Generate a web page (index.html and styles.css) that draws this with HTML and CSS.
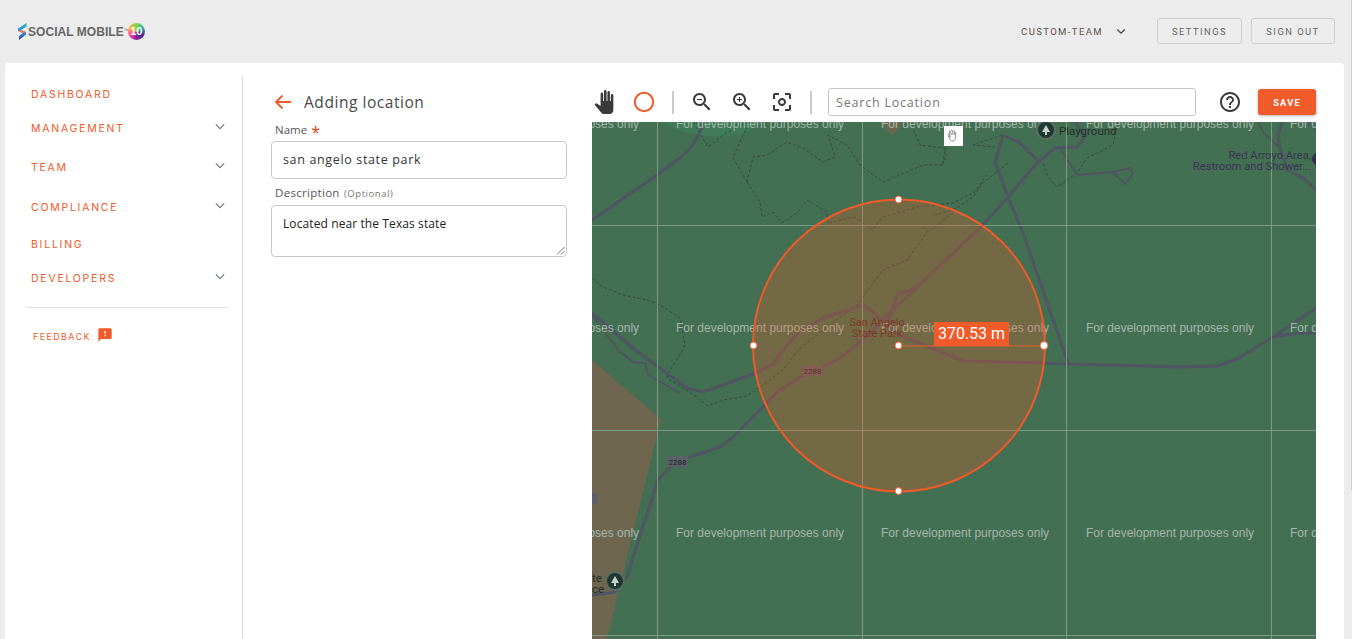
FILE: index.html
```html
<!DOCTYPE html>
<html lang="en">
<head>
<meta charset="utf-8">
<title>Adding location</title>
<link rel="stylesheet" href="styles.css">
</head>
<body>
<header class="topbar">
  <div class="logo">
    <svg class="logo-s" viewBox="0 0 11 17"><defs><linearGradient id="lg" x1="0" y1="0" x2="0" y2="1"><stop offset="0" stop-color="#22b4dc"/><stop offset=".5" stop-color="#2f8fd8"/><stop offset="1" stop-color="#2a4cb0"/></linearGradient></defs><path d="M9.500 0 L9.500 3.500 L4 7 L9 9 L9 11.500 L2 17 L2 13 L6 10 L1 8 L1 5.500 Z" fill="url(#lg)"/><path d="M1 8 L6 10 L9 9 L4 7 Z" fill="#f0805a"/></svg>
    <span class="logo-text">SOCIAL MOBILE</span><span class="logo-tm">™</span>
    <span class="logo-ten">10</span>
  </div>
  <div class="top-actions">
    <span class="team">CUSTOM-TEAM</span>
    <svg class="team-chev" viewBox="0 0 12 8"><path d="M1.500 1.500 L6 6 L10.500 1.500"/></svg>
    <button class="ghost settings">SETTINGS</button>
    <button class="ghost signout">SIGN OUT</button>
  </div>
</header>
<main class="panel">
  <nav class="nav">
    <div class="nav-item n1"><span>DASHBOARD</span></div>
    <div class="nav-item n2"><span>MANAGEMENT</span><svg class="chev" viewBox="0 0 12 8"><path d="M1 1.500 L6 6.500 L11 1.500"/></svg></div>
    <div class="nav-item n3"><span>TEAM</span><svg class="chev" viewBox="0 0 12 8"><path d="M1 1.500 L6 6.500 L11 1.500"/></svg></div>
    <div class="nav-item n4"><span>COMPLIANCE</span><svg class="chev" viewBox="0 0 12 8"><path d="M1 1.500 L6 6.500 L11 1.500"/></svg></div>
    <div class="nav-item n5"><span>BILLING</span></div>
    <div class="nav-item n6"><span>DEVELOPERS</span><svg class="chev" viewBox="0 0 12 8"><path d="M1 1.500 L6 6.500 L11 1.500"/></svg></div>
    <hr class="nav-rule">
    <div class="feedback"><span>FEEDBACK</span><svg viewBox="0 0 24 24"><path d="M20 2H4c-1.100 0-1.990.9-1.990 2L2 22l4-4h14c1.100 0 2-.9 2-2V4c0-1.100-.9-2-2-2zm-7 12h-2v-2h2v2zm0-4h-2V6h2v4z"/></svg></div>
  </nav>
  <section class="form">
    <div class="form-title">
      <svg class="back" viewBox="0 0 18 16"><path d="M17 8 H2 M8.500 1.500 L2 8 L8.500 14.500"/></svg>
      <h1>Adding location</h1>
    </div>
    <label class="lbl name-lbl">Name <span class="star">*</span></label>
    <div class="input">san angelo state park</div>
    <label class="lbl desc-lbl">Description <small>(Optional)</small></label>
    <div class="textarea">Located near the Texas state
      <svg class="grip" viewBox="0 0 9 9"><path d="M8.500 1 L1 8.500 M8.500 5 L5 8.500"/></svg>
    </div>
  </section>
  <section class="work">
    <div class="tools">
      <svg class="tool hand" viewBox="0 0 24 24"><path d="M23 5.500V20c0 2.200-1.800 4-4 4h-7.300c-1.080 0-2.100-.43-2.850-1.190L1 14.830s1.260-1.230 1.300-1.250c.22-.19.49-.29.79-.29.22 0 .42.06.6.16.04.01 4.310 2.460 4.310 2.460V4c0-.83.67-1.500 1.500-1.500S11 3.170 11 4v7h1V1.500c0-.83.67-1.500 1.500-1.500S15 .67 15 1.500V11h1V2.500c0-.83.67-1.500 1.500-1.500s1.500.67 1.500 1.500V11h1V5.500c0-.83.67-1.500 1.500-1.500s1.500.67 1.500 1.500z"/></svg>
      <svg class="tool ring" viewBox="0 0 24 24"><circle cx="12" cy="12" r="9.200"/></svg>
      <i class="sep"></i>
      <svg class="tool" viewBox="0 0 24 24"><path d="M15.500 14h-.79l-.28-.27C15.410 12.590 16 11.110 16 9.500 16 5.910 13.090 3 9.500 3S3 5.910 3 9.500 5.910 16 9.500 16c1.610 0 3.090-.59 4.230-1.570l.27.28v.79l5 4.990L20.490 19l-4.990-5zm-6 0C7.010 14 5 11.990 5 9.500S7.010 5 9.500 5 14 7.010 14 9.500 11.990 14 9.500 14zM7 9h5v1H7z"/></svg>
      <svg class="tool" viewBox="0 0 24 24"><path d="M15.500 14h-.79l-.28-.27C15.410 12.590 16 11.110 16 9.500 16 5.910 13.090 3 9.500 3S3 5.910 3 9.500 5.910 16 9.500 16c1.610 0 3.090-.59 4.230-1.570l.27.28v.79l5 4.990L20.490 19l-4.990-5zm-6 0C7.010 14 5 11.990 5 9.500S7.010 5 9.500 5 14 7.010 14 9.500 11.990 14 9.500 14z"/><path d="M12 10h-2v2H9v-2H7V9h2V7h1v2h2v1z"/></svg>
      <svg class="tool" viewBox="0 0 24 24"><path d="M5 15H3v4c0 1.100.9 2 2 2h4v-2H5v-4zM5 5h4V3H5c-1.100 0-2 .9-2 2v4h2V5zm14-2h-4v2h4v4h2V5c0-1.100-.9-2-2-2zm0 16h-4v2h4c1.100 0 2-.9 2-2v-4h-2v4zM12 8c-2.210 0-4 1.790-4 4s1.790 4 4 4 4-1.790 4-4-1.790-4-4-4zm0 6c-1.100 0-2-.9-2-2s.9-2 2-2 2 .9 2 2-.9 2-2 2z"/></svg>
      <i class="sep"></i>
      <div class="search">Search Location</div>
      <svg class="tool help" viewBox="0 0 24 24"><path d="M11 18h2v-2h-2v2zm1-16C6.480 2 2 6.480 2 12s4.480 10 10 10 10-4.480 10-10S17.520 2 12 2zm0 18c-4.410 0-8-3.590-8-8s3.590-8 8-8 8 3.590 8 8-3.590 8-8 8zm0-14c-2.210 0-4 1.790-4 4h2c0-1.100.9-2 2-2s2 .9 2 2c0 2-3 1.750-3 5h2c0-2.250 3-2.500 3-5 0-2.210-1.790-4-4-4z"/></svg>
      <button class="save">SAVE</button>
    </div>
    <div class="map">
      <svg class="map-svg" viewBox="592 122 724 517">
        <rect class="m-bg" x="592" y="122" width="724" height="517"/>
        <path class="m-brown" d="M592 360 L661 419 L607 639 L592 639 Z"/>
        <path class="m-brown" d="M883 122 L902 122 L898 130 L892 135 L887 131 Z"/>
        <path class="m-park" d="M662 122 C680 136 740 146 762 122 Z"/>

        <g class="m-trail">
          <path d="M693 122 L708 147 L723 135 L747 122"/>
          <path d="M747 182 L733 158 L743 135 L750 122"/>
          <path d="M747 182 L753 157 L767 155 L787 142 L803 148 L823 162 L835 157 L828 135 L847 145 L860 165 L883 182 L923 165 L943 165 L945 148 L920 145 L913 128"/>
          <path d="M747 182 L760 202 L762 217 L773 212 L782 223 L798 212 L807 200 L827 212 L828 223 L855 217 L872 230 L883 217 L917 207 L953 203 L975 192 L986 175"/>
          <path d="M953 213 L927 232 L907 260 L883 270 L863 297 L857 305 L823 330 L798 350 L783 370 L760 387 L747 396 L723 400 L708 406 L697 397 L667 378 L668 373 L683 350 L685 345 L680 318 L660 305 L647 300 L623 295 L603 287 L592 278"/>
          <path d="M1118 122 L1113 145 L1087 158 L1077 173 L1057 187 L1048 177 L1043 163"/>
          <path d="M1002 135 L973 145 L995 147"/>
          <path d="M1008 163 L983 183 L973 197 L957 208 L935 215"/>
          <path d="M946 148 L946 158 L940 165"/>
        </g>

        <g class="m-road">
          <path d="M592 220 L657 175 L680 158 L693 145 L705 122"/>
          <path d="M592 313 L635 350 L687 388 L703 392 L723 385 L755 373 L772 365 L797 333 L823 318 L863 305 L873 312 L887 327 L900 335 L963 361 L1045 363 L1066 364 L1180 367 L1217 366 L1237 359 L1273 337 L1316 308"/>
          <path d="M1273 337 L1297 333 L1316 333"/>
          <path d="M592 595 L615 592 L627 577 L633 557 L658 480 L670 467 L690 457 L720 447 L733 437 L765 405 L777 392 L800 377 L837 360 L857 345 L917 287 L983 225 L1008 197 L1037 163 L1055 148 L1077 147 L1085 137 L1075 122"/>
          <path d="M1003 135 L995 162 L1008 197 L1023 233 L1060 340 L1068 363"/>
          <path d="M1003 135 L1020 143 L1037 160"/>
          <path d="M887 327 L897 295 L917 287"/>
          <path d="M1282 122 L1278 135 L1280 148 L1287 170 L1303 178 L1316 190"/>
        </g>
        <g class="m-road thin">
          <path d="M1060 148 L1077 175 L1113 172 L1130 168 L1133 174 L1125 184 L1113 172"/>
          <path d="M592 315 L618 350 L633 362 L645 363 L648 375 L680 393"/>
          <path d="M857 337 L857 345 L873 330"/>
          <path d="M1258 122 L1263 132 L1280 148"/>
          <path d="M1307 122 L1316 130"/>
        </g>

        <g class="m-grid">
          <path d="M657.500 122 V639 M862.500 122 V639 M1066.500 122 V639 M1271.500 122 V639"/>
          <path d="M592 225.500 H1316 M592 430.500 H1316 M592 635.500 H1316"/>
        </g>

        <g class="m-water">
          <text x="471" y="128">For development purposes only</text><text x="676" y="128">For development purposes only</text><text x="881" y="128">For development purposes only</text><text x="1086" y="128">For development purposes only</text><text x="1290" y="128">For development purposes only</text>
          <text x="471" y="332">For development purposes only</text><text x="676" y="332">For development purposes only</text><text x="881" y="332">For development purposes only</text><text x="1086" y="332">For development purposes only</text><text x="1290" y="332">For development purposes only</text>
          <text x="471" y="537">For development purposes only</text><text x="676" y="537">For development purposes only</text><text x="881" y="537">For development purposes only</text><text x="1086" y="537">For development purposes only</text><text x="1290" y="537">For development purposes only</text>
        </g>

        <g class="m-pin"><circle cx="1046" cy="130" r="9"/><path class="tree" d="M1046 125 L1050 132 L1047 132 V135 H1045 V132 H1042 Z"/></g>
        <text class="m-lbl" x="1059" y="135">Playground</text>
        <g class="m-lbl2"><text x="1311" y="159" text-anchor="end">Red Arroyo Area,</text><text x="1311" y="170" text-anchor="end">Restroom and Shower...</text></g>
        <circle class="m-blue" cx="1318" cy="159" r="6"/>
        <g class="m-pin"><circle cx="615" cy="581" r="9"/><path class="tree" d="M615 576 L619 583 L616 583 V586 H614 V583 H611 Z"/></g>
        <g class="m-lbl"><text x="592" y="582">te</text><text x="592" y="593">ce</text></g>
        <text class="m-place" x="877" y="326" text-anchor="middle">San Angelo</text>
        <text class="m-place" x="877" y="337" text-anchor="middle">State Park</text>
        <g class="m-shield"><rect x="667" y="456" width="21" height="11"/><text x="677.500" y="464.500" text-anchor="middle">2288</text></g>
        <g class="m-shield"><rect x="802" y="366" width="21" height="10"/><text x="812.500" y="374" text-anchor="middle">2288</text></g>
        <rect class="m-shield-cut" x="592" y="493" width="5" height="11"/>

        <circle class="geo" cx="899" cy="345.500" r="146"/>
        <path class="radius" d="M898 346 H1044"/>
        <rect class="r-tag" x="934" y="322" width="75" height="24"/>
        <text class="r-text" x="971.500" y="339" text-anchor="middle">370.53 m</text>
        <g class="grip-dot">
          <circle cx="898.500" cy="199.500" r="3.500"/><circle cx="753.500" cy="345.500" r="3.500"/><circle cx="1044" cy="345.500" r="4"/><circle cx="898.500" cy="491" r="3.500"/><circle cx="898.500" cy="345.500" r="3.500"/>
        </g>
        <rect class="cursor-box" x="944" y="126" width="19" height="20"/>
        <path class="cursor" d="M950 137 L948 133.500 M950 137 L949.200 131.500 C949.300 130.700 950.300 130.700 950.500 131.500 L951.500 135 M951 131 C951.300 130.200 952.300 130.200 952.500 131 L953 135 M953 131 C953.400 130.400 954.200 130.500 954.300 131.300 L954.500 135 M954.500 132 C955 131.500 955.700 131.800 955.700 132.500 L955.600 137 C955.500 139 954.500 141 953 141 L951.500 141 C950.500 141 950 139.500 948 135.500"/>
      </svg>
    </div>
  </section>
</main>
<div class="scroll"></div>
</body>
</html>
```

FILE: styles.css
```css
* { box-sizing: border-box; }
html, body { margin: 0; height: 639px; overflow: hidden; }
body { background: #ececec; font-family: "Open Sans", sans-serif; position: relative; }

.topbar { height: 63px; display: flex; justify-content: space-between; align-items: flex-start; padding: 0 17px; }
.logo { display: flex; align-items: center; height: 17px; margin-top: 23px; color: #666; }
.logo-s { width: 11px; height: 17px; }
.logo-text { font: 700 12px "Liberation Sans", sans-serif; letter-spacing: .05px; }
.logo-tm { font: 5px "Liberation Sans", sans-serif; align-self: flex-start; margin-top: 4px; }
.logo-ten { width: 17px; height: 17px; border-radius: 50%; margin-left: -1px; background: conic-gradient(#7ad84f, #2fb6a0, #3a2a90, #8a1f9a, #ff3fa0, #ffb03a, #7ad84f); color: #fff; font: 700 11px/16px "Liberation Sans", sans-serif; text-align: center; }

.top-actions { display: flex; align-items: center; margin-top: 18px; height: 26px; }
.team { font: 400 9.500px Roboto, sans-serif; letter-spacing: 1.400px; color: #5b5048; }
.team-chev { width: 10px; height: 7px; margin: 0 31px 0 13px; fill: none; stroke: #44485a; stroke-width: 1.600; }
.ghost { height: 26px; width: 85px; background: transparent; border: 1px solid #cfcfcf; border-radius: 3px; font: 400 9.300px Roboto, sans-serif; letter-spacing: 1.500px; color: #666; padding: 0; }
.signout { width: 84px; }
.settings { margin-right: 9px; }

.panel { width: 1339px; height: 576px; margin-left: 5px; background: #fff; border-radius: 4px 4px 0 0; display: flex; }

.nav { width: 238px; margin-top: 13px; padding-top: 13px; border-right: 1px solid #dcdcdc; padding-left: 26px; font-family: Inter, sans-serif; }
.nav-item { display: flex; justify-content: space-between; align-items: center; width: 196px; height: 14px; color: #f15a29; font-size: 10.500px; letter-spacing: 1.750px; padding-right: 2px; }
.nav-item span { display: block; }
.n1 { margin-top: -2px; }
.n2 { margin-top: 20px; }
.n3 { margin-top: 25px; }
.n4 { margin-top: 26px; }
.n5 { margin-top: 23px; }
.n6 { margin-top: 20px; }
.chev { width: 10px; height: 7px; margin-top: -4px; fill: none; stroke: #6d7a8c; stroke-width: 1.500; }
.nav-rule { width: 200px; margin: 22px 0 0 -4px; border: 0; border-top: 1px solid #dedede; }
.feedback { display: flex; align-items: center; margin-top: 20px; color: #f15a29; font-size: 8.800px; letter-spacing: 1.500px; height: 16px; padding-left: 2px; }
.feedback svg { width: 16px; height: 16px; margin: -3px 0 0 6px; fill: #f15a29; }

.form { width: 349px; padding-left: 28px; color: #444; }
.form-title { display: flex; align-items: center; margin-top: 29px; height: 20px; padding-left: 3px; }
.back { width: 18px; height: 16px; fill: none; stroke: #f15a29; stroke-width: 1.800; }
.form-title h1 { margin: 0 0 0 12px; font-size: 15.500px; font-weight: 400; letter-spacing: .55px; color: #4a4a4a; }
.lbl { display: block; margin-left: 4px; font-size: 11.500px; color: #555; line-height: 14px; }
.name-lbl { margin-top: 11px; height: 18px; }
.star { color: #e0401c; font-size: 16px; line-height: 12px; vertical-align: -4px; margin-left: 1px; }
.desc-lbl { margin-top: 7px; height: 19px; letter-spacing: .3px; }
.lbl small { font-size: 9.500px; color: #777; letter-spacing: .55px; margin-left: 1px; }
.input, .textarea { width: 296px; border: 1px solid #c9c9c9; border-radius: 4px; color: #333; font-size: 12.500px; padding: 0 11px; }
.input { height: 38px; line-height: 36px; letter-spacing: .65px; }
.textarea { height: 52px; line-height: 18px; padding-top: 9px; position: relative; font-size: 12px; letter-spacing: .1px; color: #222; }
.grip { position: absolute; right: 1px; bottom: 1px; width: 9px; height: 9px; fill: none; stroke: #777; }

.work { width: 724px; display: flex; flex-direction: column; }
.tools { height: 59px; padding: 25px 0 6px; display: flex; align-items: center; gap: 16px; }
.tool { width: 24px; height: 24px; fill: #3a3a3a; flex: none; }
.hand { transform: scaleX(.85); }
.ring { fill: none; stroke: #f15a29; stroke-width: 2; }
.sep { width: 2px; height: 23px; background: #cbcbcb; flex: none; }
.search { width: 368px; height: 28px; border: 1px solid #c9c9c9; border-radius: 3px; padding-left: 7px; line-height: 27px; font-size: 12.500px; letter-spacing: .8px; color: #777; flex: none; }
.help { margin-left: 6px; }
.save { width: 58px; height: 26px; border: 0; border-radius: 3px; background: #f15a29; color: #fff; font: 700 9.300px Roboto, sans-serif; letter-spacing: 1.200px; box-shadow: 0 1px 3px rgba(0,0,0,.3); padding: 0; flex: none; }

.map { flex: 1; overflow: hidden; }
.map-svg { display: block; width: 724px; height: 517px; }
.m-bg { fill: #436f53; }
.m-brown { fill: #6f6650; }
.m-park { fill: #3f7b58; }
.m-trail path { fill: none; stroke: #34483f; stroke-width: .9; stroke-dasharray: 3 2; }
.m-road path { fill: none; stroke: #4f5661; stroke-width: 3; stroke-linejoin: round; }
.m-road.thin path { stroke-width: 1.800; }
.m-grid path { fill: none; stroke: #7f9a87; stroke-width: 1; }
.m-water text { font: 12px "Liberation Sans", sans-serif; fill: #a3b8aa; }
.m-pin circle { fill: #1f3a32; stroke: #5b6e63; stroke-width: 2; }
.tree { fill: #c7d4cc; }
.m-lbl, .m-lbl text { font: 11.500px Roboto, sans-serif; fill: #232f2b; }
.m-lbl2 text { font: 11.200px Roboto, sans-serif; fill: #3a3652; }
.m-blue { fill: #2d2d55; }
.m-place { font: 11px Roboto, sans-serif; fill: #4f2f2c; }
.m-shield rect { fill: #5c6068; }
.m-shield text { font: 8px Roboto, sans-serif; fill: #1e2226; }
.m-shield-cut { fill: #5c6068; }
.geo { fill: rgba(241,90,36,.28); stroke: #f15a29; stroke-width: 2; }
.radius { fill: none; stroke: #e0622f; stroke-width: 1; }
.r-tag { fill: #f15a29; }
.r-text { font: 16px Roboto, sans-serif; fill: #fff; }
.grip-dot circle { fill: #fff; stroke: #f15a29; stroke-width: 1; }
.cursor-box { fill: #fff; }
.cursor { fill: none; stroke: #777; stroke-width: .8; }

.scroll { position: absolute; right: 0; top: 0; width: 1px; height: 490px; background: #cfcfcf; }
```
